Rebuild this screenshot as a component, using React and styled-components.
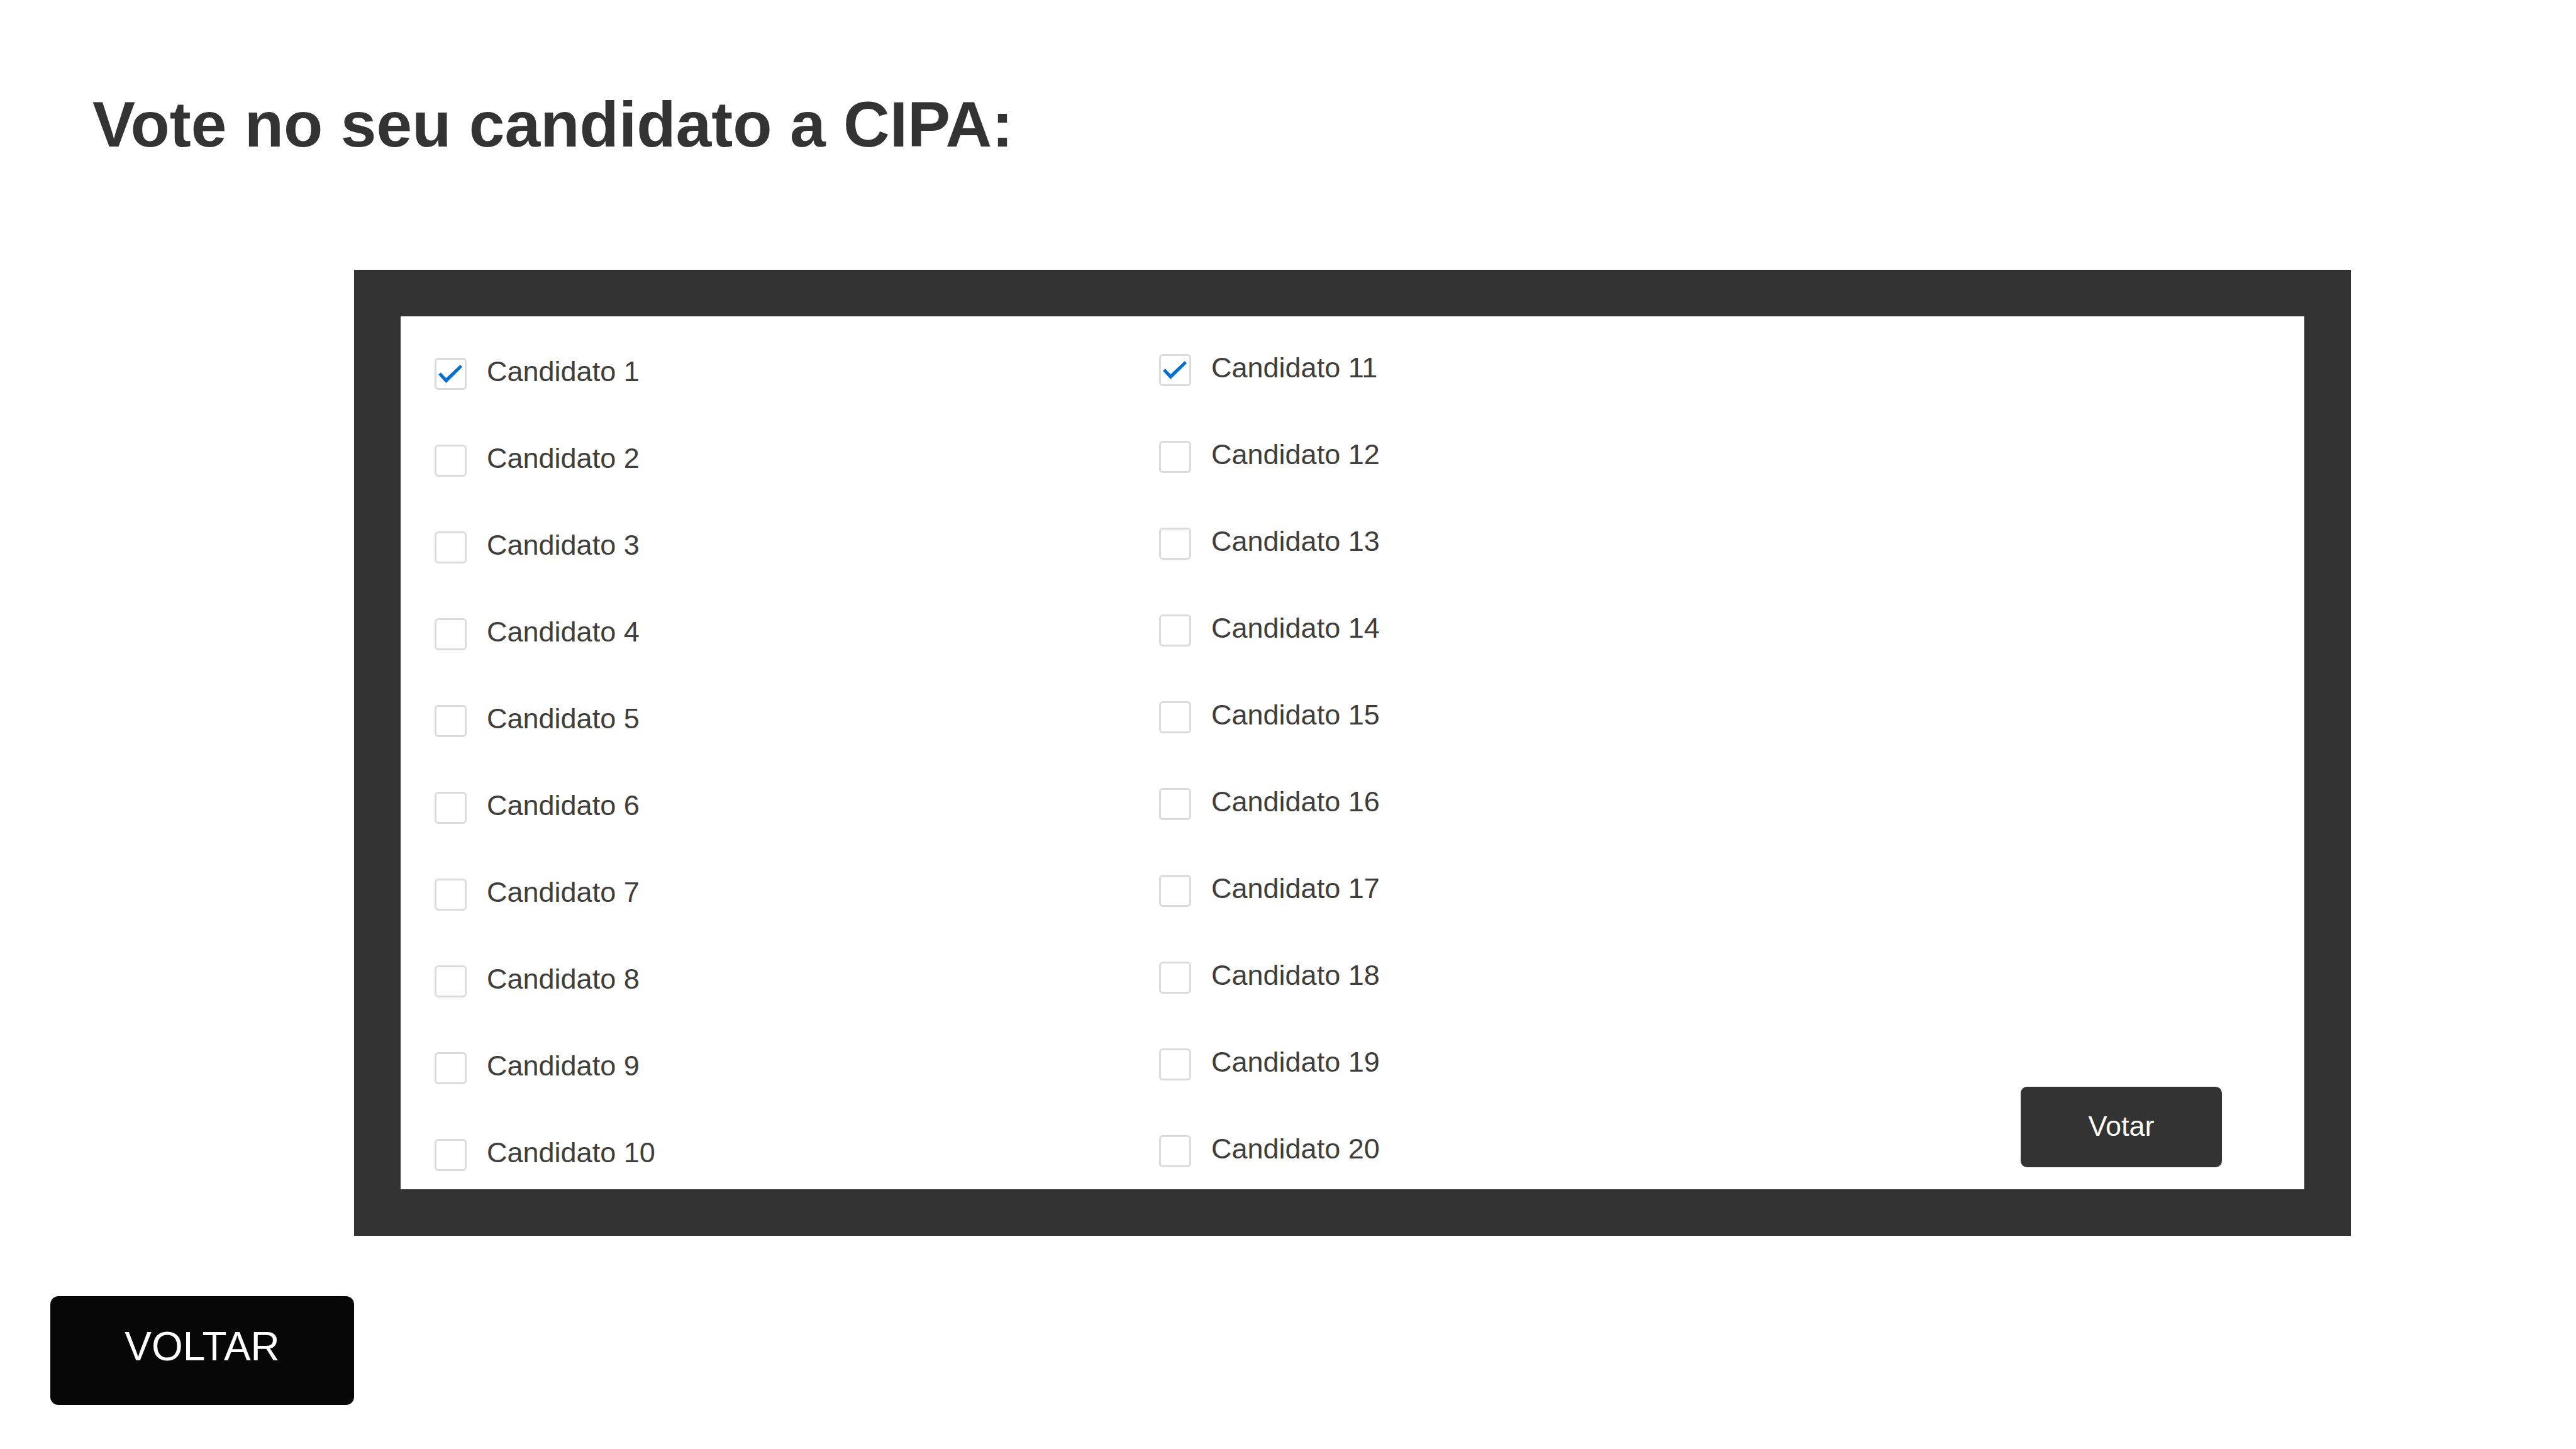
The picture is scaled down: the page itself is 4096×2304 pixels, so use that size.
import React from "react";
import styled, { createGlobalStyle } from "styled-components";

const GlobalStyle = createGlobalStyle`
  *, *::before { box-sizing: border-box; }
  body {
    margin: 0;
    background: #ffffff;
    color: #333333;
    font-family: Arial, "Liberation Sans", sans-serif;
  }
`;

const Page = styled.main`
  display: flex;
  flex-direction: column;
  min-height: 100vh;
  padding: 138px 358px 70px 80px;
`;

const Title = styled.h1`
  margin: 0 0 171px;
  padding-left: 67px;
  font-size: 102px;
  line-height: 120px;
  font-weight: 700;
`;

const Ballot = styled.form`
  margin-left: 483px;
  padding: 74px;
  background: #333333;
`;

const BallotBody = styled.div`
  display: grid;
  grid-template-columns: minmax(0, 37fr) minmax(0, 44fr) auto;
  padding: 60px 131px 29px 54px;
  background: #ffffff;
`;

const CandidateList = styled.ul`
  display: flex;
  flex-direction: column;
  gap: 87px;
  margin: 0;
  padding: ${(p) => (p.$lowered ? "6px" : "0")} 0 0;
  list-style: none;
`;

const Candidate = styled.label`
  display: flex;
  align-items: flex-start;
  gap: 32px;
  color: #3e3e3c;
  font-size: 45px;
  line-height: 43px;
  cursor: pointer;
`;

const Checkbox = styled.input`
  appearance: none;
  flex: none;
  width: 51px;
  height: 51px;
  margin: 0;
  border: 3px solid #dddbda;
  border-radius: 6px;
  background: #ffffff;
  cursor: pointer;

  &:checked::before {
    content: "";
    display: block;
    width: 100%;
    height: 100%;
    background: #0070d2;
    clip-path: polygon(7% 53%, 15% 45%, 34% 65%, 84% 18%, 91% 26%, 34% 82%);
  }
`;

const Button = styled.button`
  border: 0;
  color: #ffffff;
  font-family: inherit;
  cursor: pointer;
`;

const VoteButton = styled(Button)`
  align-self: end;
  width: 320px;
  height: 128px;
  margin-bottom: 6px;
  padding: 0 0 2px;
  border-radius: 10px;
  background: #333333;
  font-size: 45px;
`;

const BackButton = styled(Button)`
  align-self: flex-start;
  width: 483px;
  height: 173px;
  margin-top: 96px;
  padding: 0 0 14px;
  border-radius: 13px;
  background: #080707;
  font-size: 64px;
`;

function Candidates({ from, to, chosen, lowered }) {
  const numbers = Array.from({ length: to - from + 1 }, (_, i) => from + i);
  return (
    <CandidateList $lowered={lowered}>
      {numbers.map((n) => (
        <li key={n}>
          <Candidate htmlFor={`candidato-${n}`}>
            <Checkbox
              type="checkbox"
              id={`candidato-${n}`}
              name="candidato"
              value={n}
              defaultChecked={n === chosen}
            />
            <span>Candidato {n}</span>
          </Candidate>
        </li>
      ))}
    </CandidateList>
  );
}

export default function App() {
  return (
    <>
      <GlobalStyle />
      <Page>
        <Title>Vote no seu candidato a CIPA:</Title>
        <Ballot onSubmit={(e) => e.preventDefault()}>
          <BallotBody>
            <Candidates from={1} to={10} chosen={1} lowered />
            <Candidates from={11} to={20} chosen={11} />
            <VoteButton type="submit">Votar</VoteButton>
          </BallotBody>
        </Ballot>
        <BackButton type="button">VOLTAR</BackButton>
      </Page>
    </>
  );
}
